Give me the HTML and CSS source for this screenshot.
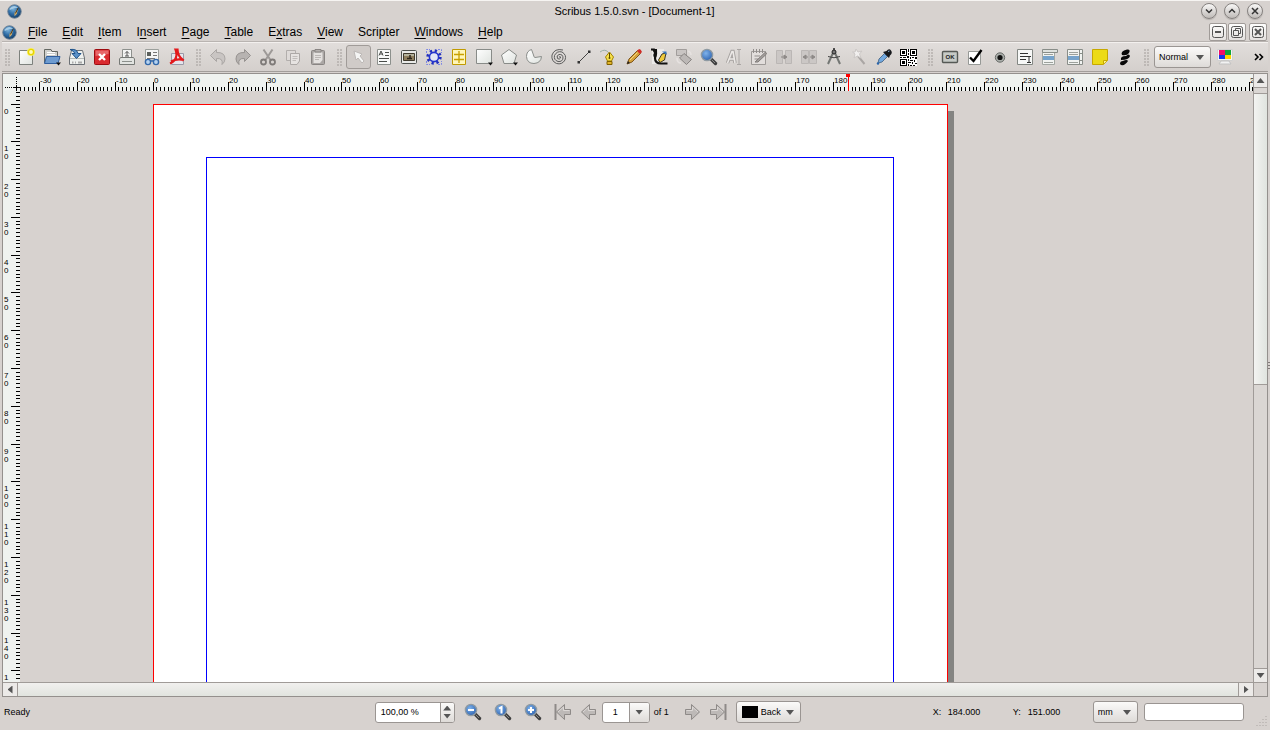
FILE: index.html
```html
<!DOCTYPE html>
<html lang="en">
<head>
<meta charset="utf-8">
<title>Scribus 1.5.0.svn - [Document-1]</title>
<link rel="stylesheet" href="styles.css">
</head>
<body>
<svg class="defs" aria-hidden="true">
  <defs>
    <radialGradient id="ball" cx="40%" cy="30%" r="75%"><stop offset="0" stop-color="#7db4dc"/><stop offset=".5" stop-color="#2f6da6"/><stop offset="1" stop-color="#123a63"/></radialGradient>
    <linearGradient id="paper" x1="0" y1="0" x2="1" y2="1"><stop offset="0" stop-color="#ffffff"/><stop offset="1" stop-color="#dfe3df"/></linearGradient>
    <radialGradient id="lens" cx="40%" cy="35%" r="70%"><stop offset="0" stop-color="#7fb2ea"/><stop offset="1" stop-color="#2c62b0"/></radialGradient>
    <symbol id="logo" viewBox="0 0 16 16"><circle cx="8" cy="8" r="7.2" fill="url(#ball)" stroke="#6f8294"/><path d="M2.500 5Q7 0 12 4Q7 4 3 6.500Z" fill="#b7d7ec" opacity=".8"/><path d="M12 4L10.500 10.500L8 13L8 9.500Z" fill="#d9b26a"/><path d="M12 4L9 10" stroke="#3b2a12"/></symbol>
    <symbol id="lens-base" viewBox="0 0 18 18"><path d="M11.500 11.500L15.500 15.500" stroke="#3f3f3f" stroke-width="3.400" stroke-linecap="round"/><path d="M12 12L15 15" stroke="#8b8b8b"/><circle cx="7" cy="7" r="5.600" fill="url(#lens)" stroke="#8f9aa2" stroke-width="1.400"/></symbol>
    <symbol id="arrow" viewBox="0 0 18 18"><path d="M1.500 6.500H7.500V1.500L15.500 9L7.500 16.500V11.500H1.500Z" fill="#bdb9b7" stroke="#8e8a88"/><path d="M2.500 7.500H8.500V4L14 9" fill="none" stroke="#dcd8d6"/></symbol>
  </defs>
</svg>
<div class="window">
  <header class="titlebar">
    <svg class="logo"><use href="#logo"/></svg>
    <h1>Scribus 1.5.0.svn - [Document-1]</h1>
    <div class="winbuttons">
      <button aria-label="Minimize"><svg viewBox="0 0 14 14"><path d="M4 5.500L7 8.500L10 5.500"/></svg></button>
      <button aria-label="Maximize"><svg viewBox="0 0 14 14"><path d="M4 8.500L7 5.500L10 8.500"/></svg></button>
      <button aria-label="Close"><svg viewBox="0 0 14 14"><path d="M4 4L10 10M10 4L4 10"/></svg></button>
    </div>
  </header>
  <nav class="menubar">
    <svg class="logo"><use href="#logo"/></svg>
    <button><u>F</u>ile</button><button><u>E</u>dit</button><button><u>I</u>tem</button><button>I<u>n</u>sert</button><button><u>P</u>age</button><button><u>T</u>able</button><button>E<u>x</u>tras</button><button><u>V</u>iew</button><button>Scripter</button><button><u>W</u>indows</button><button><u>H</u>elp</button>
    <div class="docbuttons">
      <button aria-label="Minimize document"><svg viewBox="0 0 12 12"><rect x=".5" y=".5" width="11" height="11" rx="2"/><path d="M3 6H9" stroke-width="2"/></svg></button>
      <button aria-label="Restore document"><svg viewBox="0 0 12 12"><rect x=".5" y=".5" width="11" height="11" rx="2"/><path d="M4.500 4.500V2.500H9.500V7.500H7.500M2.500 4.500H7.500V9.500H2.500Z"/></svg></button>
      <button aria-label="Close document"><svg viewBox="0 0 12 12"><rect x=".5" y=".5" width="11" height="11" rx="2"/><path d="M3 3L9 9M9 3L3 9" stroke-width="2"/></svg></button>
    </div>
  </nav>
  <div class="toolbar" role="toolbar" aria-label="Main tools">
    <span class="grip"></span>
    <button aria-label="New"><svg viewBox="0 0 18 18"><path d="M1.500 2.500H14.500V16.500H1.500Z" fill="url(#paper)" stroke="#7d817d"/><circle cx="13" cy="4" r="4" fill="#f6ee6a"/><circle cx="13" cy="4" r="2.600" fill="#fffbb8" stroke="#e8d500" stroke-width="1.400"/></svg></button>
    <button aria-label="Open"><svg viewBox="0 0 18 18"><path d="M1.500 15V1.500H8L9 3.500H14.500V10" fill="#cfd0cd" stroke="#646762"/><path d="M4 4.500H12M4 6.500H12" stroke="#fff"/><path d="M3.500 8.500H17L15 15.500H1.500Z" fill="#6d9bd0" stroke="#2f5e9e"/><path d="M13 14.500H18L15.500 17.500Z" fill="#111"/></svg></button>
    <button aria-label="Save"><svg viewBox="0 0 18 18"><path d="M3.500 2.500H14.500L16.500 10V16.500H1.500V10Z" fill="#eef0ee" stroke="#6c7176"/><path d="M2 10.500H16" stroke="#b3b8b5"/><path d="M4 14.500H5.500M7 14.500H8M10 14.500H14" stroke="#aaa" stroke-width="2"/><path d="M2 1.500Q9 .5 10 5.500H13L8.500 10.500L4 5.500H7Q6 3 2 1.500Z" fill="#5b92c8" stroke="#1f5289"/></svg></button>
    <button aria-label="Close"><svg viewBox="0 0 18 18"><rect x="1.500" y="1.500" width="15" height="15" rx="1" fill="#d92a2f" stroke="#9d0b10"/><path d="M2.500 8V2.500H15.500V6Z" fill="#e7676a"/><path d="M6 6L12 12M12 6L6 12" stroke="#fff" stroke-width="2.400"/></svg></button>
    <button aria-label="Print"><svg viewBox="0 0 18 18"><path d="M4.500 9V1.500H13.500V9" fill="#f3f4f3" stroke="#8d908d"/><path d="M9 8V3.500M7 5.500L9 3.500L11 5.500M7 8H11" fill="none" stroke="#555"/><path d="M2.500 9.500H15.500L16.500 11V16.500H1.500V11Z" fill="#e2e4e1" stroke="#767976"/><path d="M4 13.500H14" stroke="#8c908c"/></svg></button>
    <button aria-label="Preflight verifier"><svg viewBox="0 0 18 18"><path d="M2.500 1.500H15.500V12H2.500Z" fill="#f5f6f5" stroke="#9b9f9b"/><path d="M4 4H8V8H4Z" fill="#5c605c"/><path d="M10 4.500H14M10 7.500H14M4 10.500H12" stroke="#777"/><circle cx="5" cy="14" r="2.600" fill="#b6d3f1" stroke="#3469aa" stroke-width="1.400"/><circle cx="13" cy="14" r="2.600" fill="#b6d3f1" stroke="#3469aa" stroke-width="1.400"/><path d="M7.500 13H10.500" stroke="#3469aa" stroke-width="1.500"/></svg></button>
    <button aria-label="Save as PDF"><svg viewBox="0 0 18 18"><path d="M3.500 5.500H15.500V16.500H3.500Z" fill="#e5e5ec" stroke="#9a9aa8"/><path d="M2 15.500Q8 13 8.500 7Q8.500 4 7.500 1.500H9.500Q9.500 8 15.500 12.500M3 13.500Q9 10 16 12" fill="none" stroke="#e3191c" stroke-width="2.200"/></svg></button>
    <span class="grip"></span>
    <button aria-label="Undo" disabled><svg viewBox="0 0 18 18"><path d="M1.500 7.500L7.500 1.500V4.500Q16 4 16 11Q16 14 13 16.500Q14.500 10 7.500 10.500V13.500Z" fill="#c9c5c3" stroke="#aaa6a4"/></svg></button>
    <button aria-label="Redo" disabled><svg viewBox="0 0 18 18"><path d="M16.500 7.500L10.500 1.500V4.500Q2 4 2 11Q2 14 5 16.500Q3.500 10 10.500 10.500V13.500Z" fill="#b7b3b1" stroke="#969290"/></svg></button>
    <button aria-label="Cut" disabled><svg viewBox="0 0 18 18"><path d="M4.500 1.500L11.500 12M13.500 1.500L6.500 12" stroke="#9d9997" stroke-width="2"/><circle cx="4.500" cy="14" r="2.500" fill="none" stroke="#7e7a78" stroke-width="1.800"/><circle cx="13.500" cy="14" r="2.500" fill="none" stroke="#7e7a78" stroke-width="1.800"/></svg></button>
    <button aria-label="Copy" disabled><svg viewBox="0 0 18 18"><path d="M2.500 2.500H11.500V12.500H2.500Z" fill="#dedad8" stroke="#b2aeac"/><path d="M6.500 5.500H15.500V13L13 16.500H6.500Z" fill="#e6e3e1" stroke="#aca8a6"/><path d="M8.500 8.500H13.500M8.500 10.500H13.500M8.500 12.500H12" stroke="#c0bcba"/></svg></button>
    <button aria-label="Paste" disabled><svg viewBox="0 0 18 18"><rect x="2.500" y="2.500" width="13" height="14" rx="1" fill="#aaa6a4" stroke="#898583"/><path d="M4.500 4.500H13.500V12L11 15H4.500Z" fill="#e4e1df"/><path d="M6 1.500H12V4H6Z" fill="#b5b1af" stroke="#898583"/><path d="M6 7.500H12M6 9.500H12M6 11.500H10" stroke="#bbb7b5"/></svg></button>
    <span class="grip"></span>
    <button aria-label="Select item" class="active"><svg viewBox="0 0 18 18"><path d="M4 3L12 6L10 8L14 13L12 15L8 10L6 12Z" fill="#f5f5f4" stroke="#bcb8b6"/></svg></button>
    <button aria-label="Text frame"><svg viewBox="0 0 18 18"><path d="M2.500 1.500H15.500V16.500H2.500Z" fill="#f8f9f8" stroke="#8c908c"/><path d="M4 7.500L6 3L8 7.500M5 6H8M10 4.500H14M10 7.500H14M4 10.500H14M4 13.500H12" fill="none" stroke="#4a4d4a"/></svg></button>
    <button aria-label="Image frame"><svg viewBox="0 0 18 18"><rect x="1.500" y="2.500" width="15" height="13" rx="1" fill="#e9eae8" stroke="#4f524f"/><path d="M3.500 5.500H14.500V12.500H3.500Z" fill="#8d7d5c" stroke="#403a2d"/><path d="M4 6H14V8H4Z" fill="#b4b29c"/><path d="M7 10.500H12M10 7V11" stroke="#2c2519" stroke-width="1.500"/></svg></button>
    <button aria-label="Render frame"><svg viewBox="0 0 18 18"><circle cx="9" cy="9" r="6.200" fill="none" stroke="#2330c0" stroke-width="3" stroke-dasharray="2.200 2.670"/><circle cx="9" cy="9" r="4.600" fill="#e2e6f5" stroke="#2535cc" stroke-width="1.600"/><path d="M1.500 5V1.500H5M13 1.500H16.500V5M1.500 13V16.500H5M13 16.500H16.500V13" fill="none" stroke="#7d86e5" stroke-dasharray="2 1"/></svg></button>
    <button aria-label="Table"><svg viewBox="0 0 18 18"><path d="M2.500 1.500H15.500V16.500H2.500Z" fill="#fff6ba" stroke="#c09a00"/><path d="M9 3V15M4 6.500H14M4 11.500H14" stroke="#c9a100" stroke-width="1.300"/></svg></button>
    <button aria-label="Shape"><svg viewBox="0 0 18 18"><path d="M1.500 1.500H16.500V15.500H1.500Z" fill="url(#paper)" stroke="#888b88"/><path d="M13 14.500H18L15.500 17.500Z" fill="#111"/></svg></button>
    <button aria-label="Polygon"><svg viewBox="0 0 18 18"><path d="M9 1.500L16.500 7L14 15.500H4L1.500 7Z" fill="url(#paper)" stroke="#888b88"/><path d="M13 14.500H18L15.500 17.500Z" fill="#111"/></svg></button>
    <button aria-label="Arc"><svg viewBox="0 0 18 18"><path d="M6.500 1.500Q1.500 3 1.500 8.500Q2 15.500 9 15.500Q16 15 16.500 8.500L10 9.500Q8.500 9 8.500 7Z" fill="url(#paper)" stroke="#8a8d8a"/></svg></button>
    <button aria-label="Spiral"><svg viewBox="0 0 18 18"><path d="M9 9Q11 8 10.500 10Q9.500 12 7.500 10.500Q6 7.500 9 6.500Q13 6 13 10Q12.500 14 8 13.500Q3.500 12 4.500 7.500Q7 2.500 12 4Q17 7 15 12Q12 17 6.500 15.500Q1 13 2 7Q4.500 0 13 2" fill="none" stroke="#5d5d5d"/></svg></button>
    <button aria-label="Line"><svg viewBox="0 0 18 18"><path d="M4 14L14 4" stroke="#444"/><path d="M2.500 13H5V15.500H2.500ZM13 2.500H15.500V5H13Z" fill="#333"/></svg></button>
    <button aria-label="Bezier curve"><svg viewBox="0 0 18 18"><path d="M0 4Q5 0 9 5" fill="none" stroke="#9ab0a8"/><path d="M9.500 4L13.500 9L11.500 13H7.500L5.500 9Z" fill="#f8e24c" stroke="#a28200"/><path d="M7 13.500H12V16.500H7Z" fill="#e2b52a" stroke="#806000"/><path d="M9.500 5V10" stroke="#5b4a00"/><circle cx="9.500" cy="10" r="1" fill="#5b4a00"/></svg></button>
    <button aria-label="Freehand line"><svg viewBox="0 0 18 18"><path d="M2 16L4 11L12.500 2.500L15.500 5.500L7 14Z" fill="#d5a23a" stroke="#80551a"/><path d="M12 3L15 6L17 4Q16 1 14 1Z" fill="#cf2c27"/><path d="M5 12L12.500 4.500" stroke="#f5d67e"/><path d="M2 16L3 13L5 15Z" fill="#222"/></svg></button>
    <button aria-label="Calligraphic line"><svg viewBox="0 0 18 18"><path d="M2 1H14V16H2Z" fill="#eceae8"/><path d="M1 1.500H4Q6.500 5 5 10Q5 15.500 11 15.500H17.500" fill="none" stroke="#111" stroke-width="2.200"/><path d="M2 1H7Q8 6 5.500 11Q2 8 4 5Z" fill="#111"/><path d="M16 5L14.500 12L10 14.500L8.500 12L12 6Z" fill="#efca3b" stroke="#3c3727"/><path d="M12 3.500H16.500V7Z" fill="#3978bc"/></svg></button>
    <button aria-label="Rotate item" disabled><svg viewBox="0 0 18 18"><path d="M1.500 1.500H11.500V7.500H1.500Z" fill="#c9c5c3" stroke="#a19d9b"/><path d="M9 5.500L16.500 11.500L11.500 16.500L4.500 10Z" fill="#bcb8b6" stroke="#888482"/><path d="M2 10Q2 15 6 15M13 3Q16 4 16 7" fill="none" stroke="#e6e2e0" stroke-width="1.500"/></svg></button>
    <button aria-label="Zoom"><svg viewBox="0 0 18 18"><use href="#lens-base" width="18" height="18"/></svg></button>
    <button aria-label="Edit contents" disabled><svg viewBox="0 0 18 18"><path d="M2.500 15L7 3.500H8L10 15M4.500 11H9" fill="none" stroke="#a5a19f" stroke-width="3.400"/><path d="M2.500 15L7 3.500H8L10 15M4.500 11H9" fill="none" stroke="#ece9e7" stroke-width="1.600"/><path d="M12 1.500H16M12 16.500H16M14 1.500V16.500" fill="none" stroke="#aaa6a4"/></svg></button>
    <button aria-label="Story editor" disabled><svg viewBox="0 0 18 18"><path d="M1.500 3.500H15.500V16.500H1.500Z" fill="#e2dedc" stroke="#9e9a98"/><path d="M3.500 1V5M6.500 1V5M9.500 1V5M12.500 1V5M4.500 8H10M4.500 11H8" stroke="#918d8b"/><path d="M5 14L15.500 4L16.500 6L8 14Z" fill="#a29e9c" stroke="#807c7a"/></svg></button>
    <button aria-label="Link frames" disabled><svg viewBox="0 0 18 18"><path d="M1.500 2.500H7.500V15.500H1.500ZM10.500 2.500H16.500V15.500H10.500Z" fill="#cbc7c5" stroke="#bbb7b5"/><path d="M6 9H10M9 7L12 9L9 11Z" fill="#8d8987" stroke="#8d8987"/></svg></button>
    <button aria-label="Unlink frames" disabled><svg viewBox="0 0 18 18"><path d="M1.500 2.500H8.500V15.500H1.500ZM9.500 2.500H16.500V15.500H9.500Z" fill="#cbc7c5" stroke="#bbb7b5"/><path d="M6 7L3 9L6 11ZM12 7L15 9L12 11ZM5 9H8M10 9H13" fill="#8d8987" stroke="#8d8987"/></svg></button>
    <button aria-label="Measurements"><svg viewBox="0 0 18 18"><path d="M8 5L3 16M10 5L15 16" stroke="#747774" stroke-width="2"/><path d="M3 8.500Q9 11 15 8.500" fill="none" stroke="#444"/><circle cx="9" cy="4" r="2" fill="#777" stroke="#222"/><path d="M9 0V2" stroke="#222" stroke-width="1.500"/></svg></button>
    <button aria-label="Copy properties" disabled><svg viewBox="0 0 18 18"><path d="M8 8L14.500 16" stroke="#aaa6a4" stroke-width="2"/><path d="M6 1L8 4L12 3L9.500 6L11 10L7.500 8L4 10L5 6L2.500 4H5Z" fill="#f1efee" stroke="#ccc8c6"/></svg></button>
    <button aria-label="Eye dropper"><svg viewBox="0 0 18 18"><path d="M3 15L4 11L9.500 5.500L12.500 8.500L7 14Z" fill="#72a9df" stroke="#53708f"/><path d="M8 4L14 10L15 7.500Q18 5 16 2.500Q14 0 11.500 3Z" fill="#17191c"/><path d="M13 3.500L14.500 3" stroke="#8cb6e0"/><circle cx="3" cy="15.500" r="1.200" fill="#2a65ab"/></svg></button>
    <button aria-label="Barcode"><svg class="qr" viewBox="0 0 17 17" shape-rendering="crispEdges"><path d="M0 0H17V17H0Z" fill="#fff"/><path d="M.5 .5H6.500V6.500H.5ZM10.500 .5H16.500V6.500H10.500ZM.5 10.500H6.500V16.500H.5Z" stroke="#000"/><path fill="#000" d="M2 2H5V5H2ZM12 2H15V5H12ZM2 12H5V15H2ZM8 0H9V3H8ZM8 4H9V6H8ZM0 8H2V9H0ZM3 8H6V9H3ZM7 7H9V9H7ZM10 8H11V10H10ZM12 8H14V9H12ZM15 8H17V10H15ZM8 10H9V12H8ZM10 11H13V12H10ZM14 11H15V13H14ZM8 13H11V14H8ZM12 13H13V15H12ZM15 14H17V15H15ZM8 15H9V17H8ZM10 16H12V17H10ZM13 16H15V17H13Z"/></svg></button>
    <span class="grip"></span>
    <button aria-label="Push button"><svg viewBox="0 0 18 18"><rect x="1.500" y="3.500" width="15" height="11" rx="1" fill="#c6cac6" stroke="#555955" stroke-width="1.400"/><text x="9" y="11" text-anchor="middle" class="ok">OK</text></svg></button>
    <button aria-label="Check box"><svg viewBox="0 0 18 18"><path d="M2.500 3.500H14.500V16.500H2.500Z" fill="#fff" stroke="#969996"/><path d="M4 9.500L7.500 13L15.500 2" fill="none" stroke="#000" stroke-width="2.400"/></svg></button>
    <button aria-label="Radio button"><svg viewBox="0 0 18 18"><circle cx="9" cy="9.500" r="4.700" fill="#a9ada9" stroke="#686b68"/><circle cx="9" cy="9.500" r="2.600" fill="#111"/></svg></button>
    <button aria-label="Text field"><svg viewBox="0 0 18 18"><path d="M1.500 1.500H16.500V16.500H1.500Z" fill="#f7f8f7" stroke="#838783"/><path d="M4 5.500H12M4 8.500H12M4 11.500H10M11 8.500H15M11 14.500H15M13 8.500V14.500" stroke="#333"/></svg></button>
    <button aria-label="Combo box"><svg viewBox="0 0 18 18"><path d="M1.500 3.500H13.500V16.500H1.500Z" fill="#f1f3f1" stroke="#a2a7a2"/><path d="M1.500 1.500H16.500V4.500H1.500Z" fill="#dfe2df" stroke="#888d88"/><path d="M3 6.500H12M3 14.500H12" stroke="#9ca19c"/><path d="M2 8H13V12H2Z" fill="#76a3cb"/></svg></button>
    <button aria-label="List box"><svg viewBox="0 0 18 18"><path d="M1.500 1.500H16.500V16.500H1.500Z" fill="#f1f3f1" stroke="#888d88"/><path d="M3 4.500H12M3 6.500H12M3 14.500H12" stroke="#9ca19c"/><path d="M2 8H13V12H2Z" fill="#76a3cb"/><path d="M13.500 2V16M14 5.500H16M14 12.500H16" stroke="#888d88"/></svg></button>
    <button aria-label="Text annotation"><svg viewBox="0 0 18 18"><path d="M1.500 1.500H16.500V12.500L12.500 16.500H1.500Z" fill="#ecdb16" stroke="#c6a800"/><path d="M12.500 16V12.500H16" fill="#fff491" stroke="#c6a800"/></svg></button>
    <button aria-label="Link annotation"><svg viewBox="0 0 18 18"><path d="M6 7Q4 3 11 1.500Q15 1 13 5Q11 8 6 7ZM5 12Q4 8 10 8Q13 5 14 8Q13 12 5 12ZM4 16Q4 13 7 13Q11 11 12 13Q9 18 5 17Z" fill="#090909"/></svg></button>
    <span class="grip"></span>
    <select class="pick preview" aria-label="Image preview quality"><option>Normal</option></select>
    <button aria-label="Color management" class="cms"><svg viewBox="0 0 18 18"><path d="M1.500 1.500H16.500V12.500H1.500Z" fill="#f3f3f3" stroke="#d0d0d0"/><path d="M3 2H9V7H3Z" fill="#f20c68"/><path d="M9 2H15V7H9Z" fill="#10a33d"/><path d="M3 7H9V11H3Z" fill="#1636e8"/><path d="M9 7H15V11H9Z" fill="#ffd500"/><path d="M5 13H13L15 16H3Z" fill="#f2f2f2" stroke="#c2c2c2"/></svg></button>
    <button class="more" aria-label="More tools"><svg viewBox="0 0 10 8"><path d="M1 1L4 4L1 7M5.500 1L8.500 4L5.500 7" fill="none" stroke="#000" stroke-width="1.600"/></svg></button>
  </div>
  <main class="frame">
    <svg class="corner"><path class="dots" d="M13.500 3V11M2 13.500H11"/><path class="tick" d="M13.500 11V17M11 13.500H17"/></svg>
    <svg class="hruler" id="hruler"></svg>
    <svg class="vruler" id="vruler"></svg>
    <section class="canvas" aria-label="Document canvas"><div class="sheet"><div class="margins"></div></div></section>
    <div class="vscroll"><button aria-label="Scroll up"><i class="tri up"></i></button><span class="thumb"></span><button aria-label="Scroll down"><i class="tri down"></i></button></div>
    <div class="hscroll"><button aria-label="Scroll left"><i class="tri left"></i></button><span class="thumb"></span><button aria-label="Scroll right"><i class="tri right"></i></button></div>
    <span class="void"></span>
    <span class="splitter"></span>
  </main>
  <footer class="statusbar">
    <span class="message">Ready</span>
    <div class="view">
      <span class="spin"><input value="100,00 %" aria-label="Zoom level"><span class="steps"><button aria-label="Increase zoom"><i class="tri up"></i></button><button aria-label="Decrease zoom"><i class="tri down"></i></button></span></span>
      <button class="zoom" aria-label="Zoom out"><svg viewBox="0 0 18 18"><use href="#lens-base" width="18" height="18"/><path d="M4 7H10" stroke="#fff" stroke-width="2"/></svg></button>
      <button class="zoom" aria-label="Zoom to 100%"><svg viewBox="0 0 18 18"><use href="#lens-base" width="18" height="18"/><path d="M5 5.500L7.500 4V10.500" fill="none" stroke="#fff" stroke-width="2"/></svg></button>
      <button class="zoom" aria-label="Zoom in"><svg viewBox="0 0 18 18"><use href="#lens-base" width="18" height="18"/><path d="M4 7H10M7 4V10" stroke="#fff" stroke-width="2"/></svg></button>
      <button class="go" aria-label="First page"><svg viewBox="0 0 18 18"><use href="#arrow" width="18" height="18" transform="matrix(-1 0 0 1 18 0)"/><path d="M1.500 1V17" stroke="#8e8a88" stroke-width="2"/></svg></button>
      <button class="go" aria-label="Previous page"><svg viewBox="0 0 18 18"><use href="#arrow" width="18" height="18" transform="matrix(-1 0 0 1 18 0)"/></svg></button>
      <span class="spin page"><input value="1" aria-label="Current page"><button aria-label="Choose page"><i class="tri down"></i></button></span>
      <span class="count">of 1</span>
      <button class="go" aria-label="Next page"><svg viewBox="0 0 18 18"><use href="#arrow" width="18" height="18"/></svg></button>
      <button class="go" aria-label="Last page"><svg viewBox="0 0 18 18"><use href="#arrow" width="18" height="18"/><path d="M16.500 1V17" stroke="#8e8a88" stroke-width="2"/></svg></button>
      <select class="pick layer" aria-label="Layer"><option>Back</option></select>
    </div>
    <div class="position">
      <span class="axis first">X:</span><output>184.000</output>
      <span class="axis">Y:</span><output>151.000</output>
      <select class="pick unit" aria-label="Unit"><option>mm</option></select>
      <span class="progress"></span>
    </div>
    <svg class="sizegrip" viewBox="0 0 12 12"><path d="M10 1V2M7 4V5M10 4V5M4 7V8M7 7V8M10 7V8M1 10V11M4 10V11M7 10V11M10 10V11"/></svg>
  </footer>
</div>
<script src="rulers.js"></script>
</body>
</html>
```
FILE: styles.css
```css
* { box-sizing: border-box; }
body { margin: 0; font-family: "Liberation Sans", Arial, sans-serif; font-size: 9px; color: #000; background: #d7d2cf; }
button { margin: 0; padding: 0; border: 0; background: none; color: inherit; font: inherit; }
.defs { position: absolute; width: 0; height: 0; }
.window { display: flex; flex-direction: column; height: 100vh; overflow: hidden; padding: 0 2px; border-top: 1px solid #f6f4f2; background: #d7d2cf; }
.logo { width: 15px; height: 15px; flex: none; }

.titlebar { display: flex; align-items: center; flex: none; height: 22px; padding: 0 5px 2px 5px; }
.titlebar h1 { flex: 1; margin: 0; font-size: 11px; font-weight: 400; text-align: center; padding-left: 46px; }
.winbuttons { display: flex; gap: 7px; }
.winbuttons button { width: 16px; height: 16px; border: 1px solid #85817f; border-radius: 8px; background: linear-gradient(#f8f7f6, #bfbbb8); box-shadow: 0 1px 1px #b5b0ad; }
.winbuttons svg { display: block; width: 14px; height: 14px; fill: none; stroke: #333; stroke-width: 1.5; }

.menubar { display: flex; align-items: center; gap: 1px; flex: none; height: 19px; border-bottom: 1px solid #b9b4b1; }
.menubar > .logo { margin-right: 3px; }
.menubar > button { padding: 0 7px; font-size: 12px; line-height: 16px; white-space: nowrap; }
.menubar u { text-underline-offset: 2px; text-decoration-thickness: 1px; }
.docbuttons { display: flex; gap: 1px; margin-left: auto; padding-right: 1px; }
.docbuttons button { width: 18px; height: 18px; padding: 2px; border: 1px solid #a09b98; border-radius: 2px; background: linear-gradient(#fdfdfc, #e4e1df); }
.docbuttons button:last-child { margin-left: 2px; }
.docbuttons svg { display: block; width: 12px; height: 12px; fill: none; stroke: #555; }

.toolbar { display: flex; align-items: center; flex: none; height: 30px; padding-right: 4px; border-top: 1px solid #f3f0ee; border-bottom: 1px solid #a29d9a; background: linear-gradient(#e1dddb, #d4cfcc); }
.toolbar > button { display: flex; align-items: center; justify-content: center; flex: none; width: 25px; height: 24px; }
.toolbar > button svg { width: 18px; height: 18px; fill: none; }
.toolbar > button .qr { width: 17px; height: 17px; }
.toolbar > .active { border: 1px solid #a09b98; border-radius: 3px; background: #d0cbc8; }
.grip { flex: none; width: 6px; height: 17px; margin: 0 3px 0 7px; background: radial-gradient(circle at 1px 1px, #aba6a3 1px, transparent 1px) 0 0 / 3px 3px; opacity: .6; }
.grip:first-child { margin-left: 3px; }
.ok { font-size: 6px; font-weight: 700; fill: #222; }
.toolbar > .cms { width: 27px; }
.toolbar > .more { width: 10px; margin-left: auto; }
.toolbar > .more svg { width: 10px; height: 8px; }

.pick { appearance: none; flex: none; height: 22px; margin: 0; padding: 0 18px 0 4px; border: 1px solid #9a9592; border-radius: 3px; color: #000; font: inherit; outline: 0;
  background: url("data:image/svg+xml,%3Csvg xmlns='http://www.w3.org/2000/svg' width='8' height='5'%3E%3Cpath d='M0 0H8L4 5Z' fill='%23555'/%3E%3C/svg%3E") no-repeat right 6px center, linear-gradient(#fbfaf9, #dedbd8); }
.preview { width: 57px; margin-left: 1px; }
.layer { width: 65px; margin-left: 5px; padding-left: 24px;
  background: url("data:image/svg+xml,%3Csvg xmlns='http://www.w3.org/2000/svg' width='8' height='5'%3E%3Cpath d='M0 0H8L4 5Z' fill='%23555'/%3E%3C/svg%3E") no-repeat right 6px center, linear-gradient(#000, #000) no-repeat 5px center / 16px 12px, linear-gradient(#fbfaf9, #dedbd8); }
.unit { width: 45px; }

.frame { position: relative; flex: 1; min-height: 0; display: grid; grid-template: 17px 1fr 14px / 17px 1fr 14px; margin-top: 1px; border: 1px solid #94908d; }
.corner, .hruler, .vruler { display: block; width: 100%; height: 100%; background: #eff2ef; overflow: hidden; }
.hruler { grid-area: 1 / 2; min-width: 0; }
.vruler { grid-area: 2 / 1; min-height: 0; }
.tick, .ruler-tick { stroke: #000; fill: none; shape-rendering: crispEdges; }
.dots { stroke: #000; stroke-dasharray: 1 1; shape-rendering: crispEdges; }
.ruler-label { font-size: 8px; fill: #000; }
.cursor { fill: #f00; shape-rendering: crispEdges; }
.canvas { grid-area: 2 / 2; min-width: 0; min-height: 0; overflow: hidden; padding: 13px 0 0 133px; }
.sheet { width: 795px; height: 1123px; padding: 52px 53px 53px 52px; border: 1px solid #f00; background: #fff; box-shadow: 6px 7px 0 #848482; }
.margins { width: 100%; height: 100%; border: 1px solid #00f; }

.vscroll { grid-area: 1 / 3 / 3 / 4; display: flex; flex-direction: column; min-height: 0; border-left: 1px solid #a09b98; background: #dad6d3; }
.vscroll button { flex: none; height: 14px; background: #eceae8; display: flex; align-items: center; justify-content: center; }
.vscroll button:first-child { border-bottom: 1px solid #a09b98; }
.vscroll button:last-child { border-top: 1px solid #a09b98; margin-top: auto; }
.vscroll .thumb { height: 48%; margin-top: 5px; border: 1px solid #a09b98; border-width: 1px 0; background: linear-gradient(90deg, #f3f3f1, #e0e4df); }
.hscroll { grid-area: 3 / 1 / 4 / 3; display: flex; border-top: 1px solid #a09b98; background: #eceae8; }
.hscroll button { flex: none; width: 14px; display: flex; align-items: center; justify-content: center; }
.hscroll .thumb { flex: 1; border: 1px solid #a09b98; border-width: 0 1px; background: linear-gradient(#f1f0ee, #e1e4df); }
.void { grid-area: 3 / 3; border: 1px solid #a09b98; border-width: 1px 0 0 1px; }
.splitter { position: absolute; right: -3px; top: 288px; width: 2px; height: 7px; background: repeating-linear-gradient(#807b78 0 1px, transparent 1px 3px); }

.tri { display: block; width: 8px; height: 5px; background: #555; }
.up { clip-path: polygon(50% 0, 100% 100%, 0 100%); }
.down { clip-path: polygon(0 0, 100% 0, 50% 100%); }
.left { width: 5px; height: 8px; clip-path: polygon(0 50%, 100% 0, 100% 100%); }
.right { width: 5px; height: 8px; clip-path: polygon(0 0, 100% 50%, 0 100%); }

.statusbar { position: relative; display: flex; align-items: center; flex: none; height: 33px; padding-bottom: 3px; }
.message { flex: 372 1 0; padding-left: 2px; }
.view { display: flex; align-items: center; flex: none; }
.spin { display: flex; width: 80px; height: 21px; border: 1px solid #9a9592; border-radius: 3px; background: #fff; overflow: hidden; margin-right: 6px; }
.spin input { flex: 1; min-width: 0; margin: 0; padding: 0 0 0 5px; border: 0; background: none; font: inherit; outline: 0; }
.steps { display: flex; flex-direction: column; justify-content: space-evenly; align-items: center; width: 14px; border-left: 1px solid #9a9592; background: linear-gradient(#fbfaf9, #dedbd8); }
.page { width: 48px; margin: 0 4px 0 1px; }
.page input { padding-left: 10px; }
.page button { display: flex; align-items: center; justify-content: center; width: 20px; border-left: 1px solid #9a9592; background: linear-gradient(#fbfaf9, #dedbd8); }
.zoom { width: 24px; margin-right: 6px; }
.go { width: 25px; }
.zoom svg, .go svg { display: block; width: 18px; height: 18px; margin: 0 auto; }
.count { width: 27px; }
.position { display: flex; align-items: center; flex: 469 1 0; }
.axis { width: 15px; }
.axis.first { margin-left: 132px; }
.position output { width: 65px; }
.progress { flex: none; width: 100px; height: 18px; margin-left: 6px; border: 1px solid #9a9592; border-radius: 3px; background: #fff; }
.sizegrip { position: absolute; right: 0; bottom: 3px; width: 12px; height: 12px; stroke: #aaa5a2; stroke-width: 1; }
```
FILE: rulers.js
```js
const NS = "http://www.w3.org/2000/svg";
const PX_PER_MM = 96 / 25.4;

function add(parent, name, attrs, text) {
  const node = document.createElementNS(NS, name);
  for (const key in attrs) node.setAttribute(key, attrs[key]);
  if (text !== undefined) node.textContent = text;
  parent.appendChild(node);
}

function drawRuler(svg, origin, vertical) {
  const box = svg.getBoundingClientRect();
  const length = vertical ? box.height : box.width;
  const firstMm = -Math.floor(origin / PX_PER_MM);
  const lastMm = Math.floor((length - origin) / PX_PER_MM);
  let path = "";
  svg.replaceChildren();
  for (let mm = firstMm; mm <= lastMm; mm++) {
    const at = Math.floor(origin + mm * PX_PER_MM) + 0.5;
    const major = mm % 10 === 0;
    const start = major ? 8 : 13;
    path += vertical ? `M${start} ${at}H17` : `M${at} ${start}V17`;
    if (!major) continue;
    if (vertical) {
      String(mm).split("").forEach((digit, i) => {
        const y = Math.floor(at) + 10 + i * 8;
        if (y <= length) add(svg, "text", { x: 1, y, class: "ruler-label" }, digit);
      });
    } else {
      add(svg, "text", { x: Math.floor(at) + 1, y: 9, class: "ruler-label" }, String(mm));
    }
  }
  add(svg, "path", { d: path, class: "ruler-tick" });
}

function drawRulers() {
  const across = document.getElementById("hruler");
  drawRuler(across, 133, false);
  drawRuler(document.getElementById("vruler"), 13, true);
  add(across, "path", { d: "M826 0H830V3H829V17H828V3H826Z", class: "cursor" });
}

drawRulers();
window.addEventListener("resize", drawRulers);
```
